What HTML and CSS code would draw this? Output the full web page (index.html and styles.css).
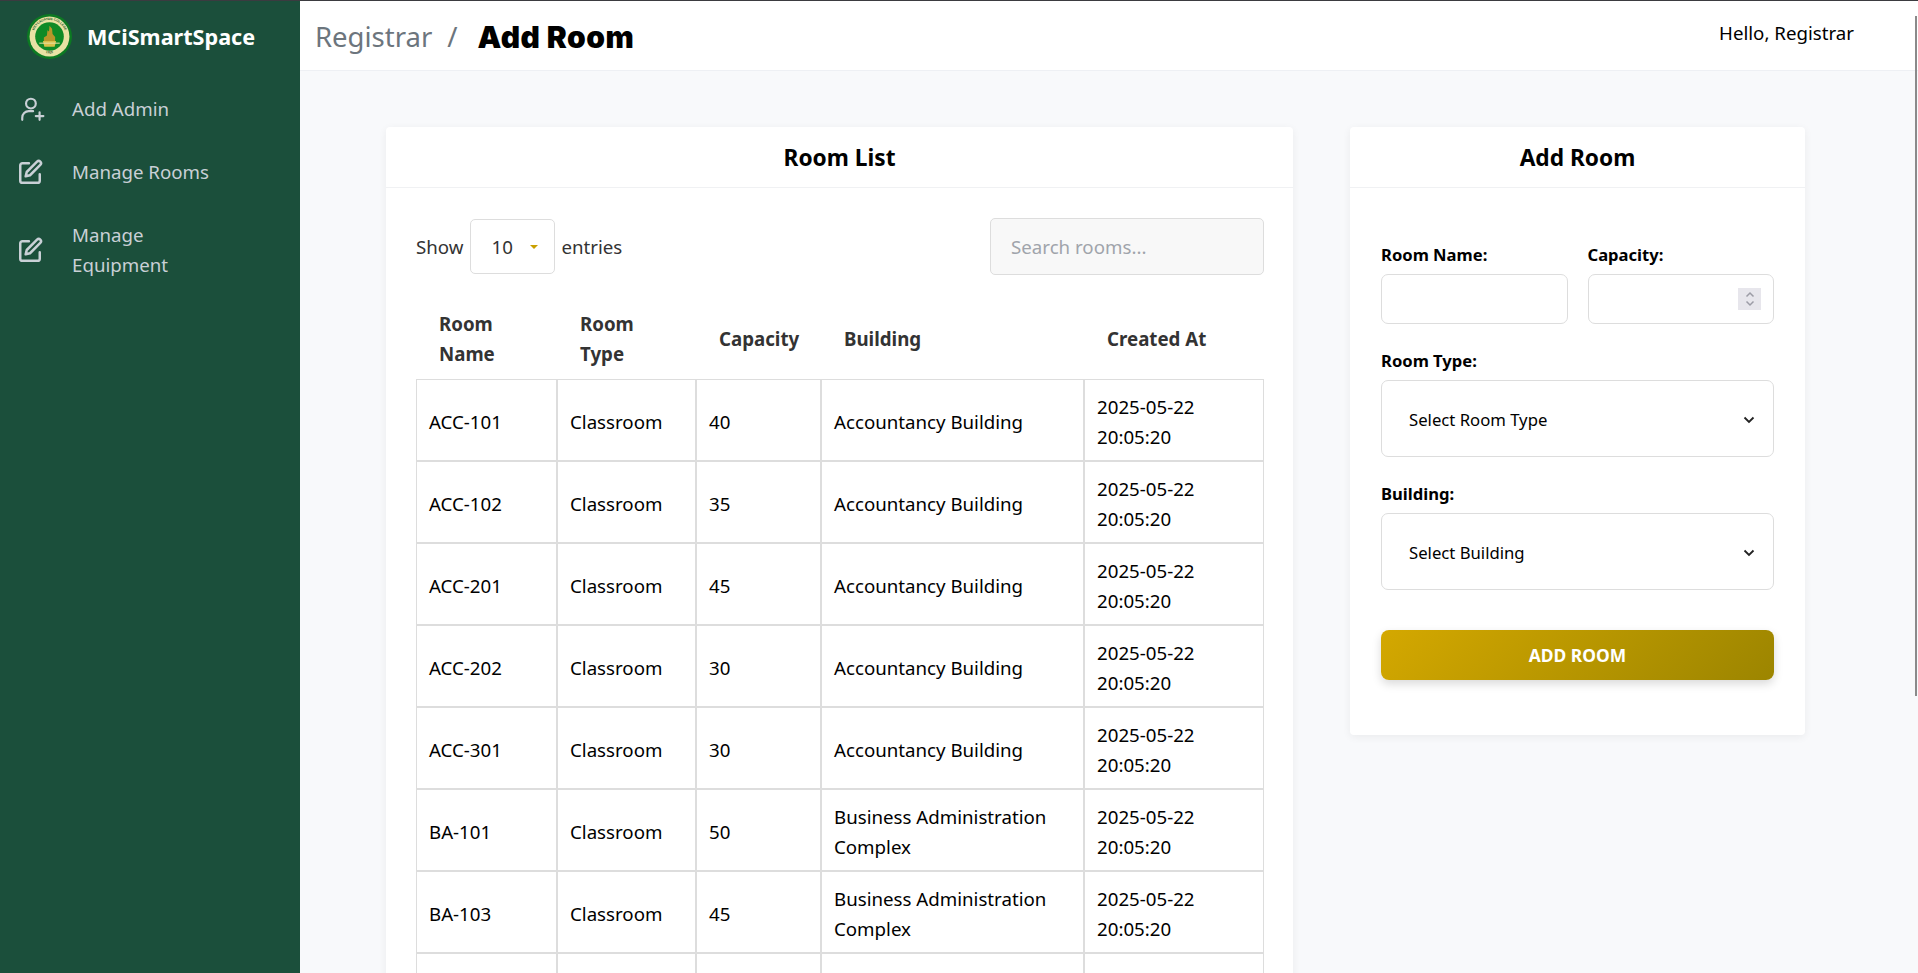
FILE: index.html
```html
<!DOCTYPE html>
<html>
<head>
  <title>Add Room</title>
  <link rel="stylesheet" href="styles.css">
</head>
<body>
  <div class="app">
    <div class="sidebar">
      <div class="brand">
        <svg class="logo" viewBox="0 0 44 44">
          <defs>
            <path id="ring-top" d="M6.300 26A16.200 16.200 0 1 1 37.700 26"/>
            <path id="ring-bottom" d="M11 34.500A17 17 0 0 0 33 34.500"/>
          </defs>
          <circle cx="22" cy="22" r="22" fill="#0c7a22"/>
          <circle cx="22" cy="22" r="19.500" fill="#e9e2a4"/>
          <text class="logo-text"><textPath href="#ring-top" startOffset="50%" text-anchor="middle">MEYCAUAYAN COLLEGE</textPath></text>
          <text class="logo-text"><textPath href="#ring-bottom" startOffset="50%" text-anchor="middle">1925</textPath></text>
          <circle cx="22" cy="22" r="14" fill="#0f8a26"/>
          <path d="M22 11.500l2.500 3 .5 5 2.500 3v4.500h-11v-4l3-2 .5-5 1.500 1z" fill="#b8962a"/>
          <path d="M15.500 26.500h13l-1.500 5.500H17z" fill="#d8c04a"/>
          <path d="M12 28h20v1H12z" fill="#e9e2a4"/>
        </svg>
        <span class="brand-name">MCiSmartSpace</span>
      </div>
      <div class="nav-item">
        <svg class="nav-icon" viewBox="0 0 24 24"><circle cx="11" cy="7" r="4.500"/><path d="M3 22v-2a6 6 0 0 1 6-6h4"/><path d="M19 15v7M15.500 18.500h7"/></svg>
        <span>Add Admin</span>
      </div>
      <div class="nav-item">
        <svg class="nav-icon edit-icon" viewBox="0 0 24 24"><path d="M11 4H5a2 2 0 0 0-2 2v14a2 2 0 0 0 2 2h14a2 2 0 0 0 2-2v-6"/><path d="M18.500 2.500a2.100 2.100 0 0 1 3 3L12 15l-4 1 1-4z"/></svg>
        <span>Manage Rooms</span>
      </div>
      <div class="nav-item">
        <svg class="nav-icon edit-icon" viewBox="0 0 24 24"><path d="M11 4H5a2 2 0 0 0-2 2v14a2 2 0 0 0 2 2h14a2 2 0 0 0 2-2v-6"/><path d="M18.500 2.500a2.100 2.100 0 0 1 3 3L12 15l-4 1 1-4z"/></svg>
        <span>Manage<br>Equipment</span>
      </div>
    </div>

    <div class="main">
      <div class="topbar">
        <div class="crumbs">
          <span class="crumb-parent">Registrar</span>
          <span class="crumb-sep">/</span>
          <span class="crumb-current">Add Room</span>
        </div>
        <div class="hello">Hello, Registrar</div>
      </div>

      <div class="content">
        <div class="card list-card">
          <div class="card-title">Room List</div>
          <div class="card-body">
            <div class="table-tools">
              <div class="show-entries">
                Show
                <div class="entries-select"><span>10</span><i class="caret"></i></div>
                entries
              </div>
              <input class="search" type="text" placeholder="Search rooms...">
            </div>
            <table class="rooms">
              <thead>
                <tr>
                  <th class="col-name">Room Name</th>
                  <th class="col-type">Room Type</th>
                  <th class="col-cap">Capacity</th>
                  <th class="col-bld">Building</th>
                  <th class="col-date">Created At</th>
                </tr>
              </thead>
              <tbody>
                <tr><td>ACC-101</td><td>Classroom</td><td>40</td><td>Accountancy Building</td><td>2025-05-22 20:05:20</td></tr>
                <tr><td>ACC-102</td><td>Classroom</td><td>35</td><td>Accountancy Building</td><td>2025-05-22 20:05:20</td></tr>
                <tr><td>ACC-201</td><td>Classroom</td><td>45</td><td>Accountancy Building</td><td>2025-05-22 20:05:20</td></tr>
                <tr><td>ACC-202</td><td>Classroom</td><td>30</td><td>Accountancy Building</td><td>2025-05-22 20:05:20</td></tr>
                <tr><td>ACC-301</td><td>Classroom</td><td>30</td><td>Accountancy Building</td><td>2025-05-22 20:05:20</td></tr>
                <tr><td>BA-101</td><td>Classroom</td><td>50</td><td>Business Administration Complex</td><td>2025-05-22 20:05:20</td></tr>
                <tr><td>BA-103</td><td>Classroom</td><td>45</td><td>Business Administration Complex</td><td>2025-05-22 20:05:20</td></tr>
                <tr><td></td><td></td><td></td><td></td><td></td></tr>
              </tbody>
            </table>
          </div>
        </div>

        <div class="card form-card">
          <div class="card-title">Add Room</div>
          <div class="form-body">
            <div class="form-row">
              <div class="field">
                <div class="field-label">Room Name:</div>
                <div class="box small-box"></div>
              </div>
              <div class="field">
                <div class="field-label">Capacity:</div>
                <div class="box small-box number-box">
                  <div class="spinner">
                    <svg viewBox="0 0 10 18"><path d="M1.500 6.500 5 3l3.500 3.500M1.500 11.500 5 15l3.500-3.500"/></svg>
                  </div>
                </div>
              </div>
            </div>
            <div class="field">
              <div class="field-label">Room Type:</div>
              <div class="box select-box">
                <span>Select Room Type</span>
                <svg class="chevron" viewBox="0 0 12 8"><path d="M1.500 1.500 6 6l4.500-4.500"/></svg>
              </div>
            </div>
            <div class="field">
              <div class="field-label">Building:</div>
              <div class="box select-box">
                <span>Select Building</span>
                <svg class="chevron" viewBox="0 0 12 8"><path d="M1.500 1.500 6 6l4.500-4.500"/></svg>
              </div>
            </div>
            <button class="add-btn">ADD ROOM</button>
          </div>
        </div>
      </div>
    </div>
  </div>
  <div class="top-line"></div>
  <div class="scroll-thumb"></div>
</body>
</html>
```

FILE: styles.css
```css
* {
  box-sizing: border-box;
}

html, body {
  margin: 0;
  height: 100%;
  overflow: hidden;
}

body {
  font-family: "Noto Sans", "Open Sans", sans-serif;
  font-size: 18.7px;
  color: #000;
  background: #f8f9fb;
}

.top-line {
  position: absolute;
  top: 0;
  left: 0;
  right: 0;
  height: 1px;
  background: #3b3b40;
}

.scroll-thumb {
  position: absolute;
  top: 16px;
  right: 1px;
  width: 2px;
  height: 680px;
  background: #8a8a8a;
}

.app {
  display: flex;
  height: 100vh;
  overflow: hidden;
}

.sidebar {
  width: 300px;
  flex-shrink: 0;
  background: #1b4f3b;
  color: #c9d0d6;
}

.brand {
  display: flex;
  align-items: center;
  height: 70px;
  margin-bottom: 9px;
  padding: 3px 0 0 27px;
  gap: 15px;
}

.logo {
  width: 45px;
  height: 45px;
}

.logo-text {
  font-family: "Liberation Sans", sans-serif;
  font-size: 3.200px;
  font-weight: 700;
  fill: #1d5a2a;
}

.brand-name {
  color: #fff;
  font-size: 21.600px;
  font-weight: 700;
}

.nav-item {
  display: flex;
  align-items: center;
  padding: 15px 20px 15px 19px;
  line-height: 30px;
  margin-bottom: 3px;
}

.nav-icon {
  width: 26px;
  height: 26px;
  margin-right: 27px;
  flex-shrink: 0;
  fill: none;
  stroke: #c9d0d6;
  stroke-width: 2;
  stroke-linecap: round;
  stroke-linejoin: round;
}

.edit-icon {
  margin-left: -2px;
  margin-right: 29px;
  stroke-width: 2.300;
}

.main {
  flex: 1;
  min-width: 0;
}

.topbar {
  display: flex;
  justify-content: space-between;
  height: 71px;
  padding: 0 64px 0 15px;
  background: #fff;
  border-bottom: 1px solid #eef0f4;
}

.crumbs {
  display: flex;
  align-items: center;
  gap: 15px;
  padding-top: 3px;
  font-size: 27.500px;
}

.crumb-parent, .crumb-sep {
  color: #6c757d;
}

.crumb-current {
  margin-left: 5px;
  font-family: "Inter", sans-serif;
  font-weight: 900;
  font-size: 30px;
  letter-spacing: 0.500px;
  color: #000;
}

.hello {
  padding-top: 20px;
}

.content {
  display: flex;
  align-items: flex-start;
  gap: 57px;
  padding: 56px 0 0 86px;
}

.card {
  background: #fff;
  border-radius: 4px;
  box-shadow: 0 2px 8px rgba(0, 0, 0, 0.06);
}

.list-card {
  width: 907px;
}

.form-card {
  width: 455px;
}

.card-title {
  height: 61px;
  line-height: 62px;
  text-align: center;
  font-size: 22.700px;
  font-weight: 700;
  border-bottom: 1px solid #f0f1f3;
}

.card-body {
  padding: 30px 29px 0 30px;
}

.table-tools {
  display: flex;
  justify-content: space-between;
  align-items: center;
  margin-bottom: 24px;
}

.show-entries {
  display: flex;
  align-items: center;
  gap: 6px;
  color: #333;
}

.entries-select {
  display: flex;
  align-items: center;
  justify-content: space-between;
  width: 85px;
  height: 55px;
  margin-left: 1px;
  padding: 0 16px 0 20px;
  border: 1px solid #ddd;
  border-radius: 5px;
}

.caret {
  width: 0;
  height: 0;
  border-left: 4px solid transparent;
  border-right: 4px solid transparent;
  border-top: 4px solid #c9a000;
}

.search {
  width: 274px;
  height: 57px;
  padding: 0 20px;
  font-family: inherit;
  font-size: 18.700px;
  background: #f8f8f8;
  border: 1px solid #ddd;
  border-radius: 5px;
}

.search::placeholder {
  color: #a0a4ab;
}

.rooms {
  width: 848px;
  table-layout: fixed;
  border-collapse: separate;
  border-spacing: 0;
  line-height: 30px;
}

.rooms th {
  height: 80px;
  padding: 0 22px 0 23px;
  text-align: left;
  font-weight: 700;
  color: #333;
}

.rooms td {
  height: 82px;
  padding: 12px 12px 8px 12px;
  border: 1px solid #ddd;
}

.col-name { width: 141px; }
.col-type { width: 139px; }
.col-cap { width: 125px; }
.col-bld { width: 263px; }
.col-date { width: 180px; }

.form-body {
  padding: 54px 31px 55px;
}

.form-row {
  display: flex;
  gap: 20px;
}

.form-row .field {
  flex: 1;
}

.field {
  margin-bottom: 24px;
}

.field-label {
  margin-bottom: 6px;
  line-height: 26px;
  font-size: 16.600px;
  font-weight: 700;
}

.box {
  display: flex;
  align-items: center;
  justify-content: space-between;
  background: #fff;
  border: 1px solid #ddd;
  border-radius: 7px;
}

.small-box {
  height: 50px;
}

.number-box {
  justify-content: flex-end;
  padding-right: 12px;
}

.spinner {
  display: flex;
  width: 23px;
  height: 22px;
  background: #e7e6ec;
  align-items: center;
  justify-content: center;
}

.spinner svg {
  width: 10px;
  height: 18px;
  fill: none;
  stroke: #9c9ca6;
  stroke-width: 1.500;
}

.select-box {
  height: 77px;
  padding: 2px 18px 0 27px;
  font-size: 16.700px;
}

.chevron {
  width: 12px;
  height: 8px;
  fill: none;
  stroke: #222;
  stroke-width: 1.800;
}

.add-btn {
  display: block;
  width: 100%;
  height: 50px;
  margin-top: 40px;
  font-family: inherit;
  font-size: 17.400px;
  font-weight: 700;
  color: #fff;
  background: linear-gradient(135deg, #d4a800, #9c8500);
  border: 0;
  border-radius: 8px;
  box-shadow: 0 4px 10px rgba(0, 0, 0, 0.15);
}
```
